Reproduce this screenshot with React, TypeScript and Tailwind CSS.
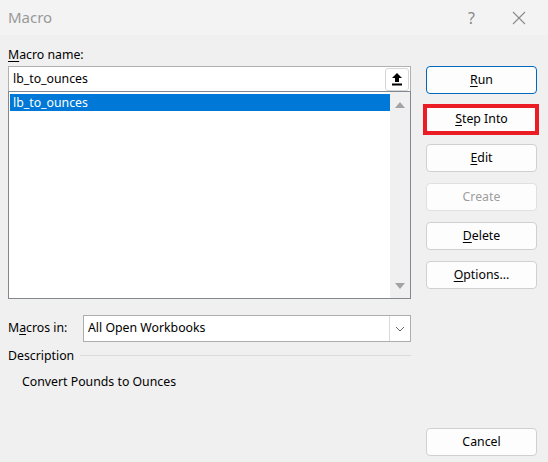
import React from 'react';

const font = { fontFamily: '"Noto Sans", "Open Sans", sans-serif' };

// Dialog push button, optional accent border for the default one
const Btn: React.FC<{ children: React.ReactNode; primary?: boolean; disabled?: boolean }> = ({ children, primary, disabled }) => (
  <div
    className={`h-[28px] w-[111px] shrink-0 rounded-[4px] border flex items-center justify-center text-[12.3px] bg-[#fdfdfd] ${
      primary ? 'border-[#0067c0]' : 'border-[#d0d0d0]'
    } ${disabled ? 'text-[#9d9d9d] border-[#e0e0e0]' : 'text-black'}`}
  >
    {children}
  </div>
);

const U: React.FC<{ children: React.ReactNode }> = ({ children }) => <span className="underline underline-offset-[2px]">{children}</span>;

const UpArrow = () => (
  <svg width="12" height="14" viewBox="0 0 12 14">
    <path d="M6 1 L11 6 H8 V10 H4 V6 H1 Z" fill="#000" />
    <rect x="1" y="11.5" width="10" height="2" fill="#000" />
  </svg>
);

const Tri: React.FC<{ down?: boolean }> = ({ down }) => (
  <svg width="12" height="8" viewBox="0 0 12 8">
    <path d={down ? 'M1 1 H11 L6 7 Z' : 'M1 7 H11 L6 1 Z'} fill="#a3a3a3" />
  </svg>
);

export default function App() {
  return (
    <div className="w-[548px] h-[462px] bg-[#f0f0f0] flex flex-col select-none" style={font}>
      {/* title bar */}
      <div className="h-[35px] bg-[#f3f3f3] flex items-center pl-[8px] text-[15px] text-[#999]">
        <span>Macro</span>
        <span className="ml-auto mr-[37px] text-[16px] text-[#8a8a8a]">?</span>
        <svg className="mr-[22px]" width="14" height="14" viewBox="0 0 14 14">
          <path d="M1 1 L13 13 M13 1 L1 13" stroke="#8a8a8a" strokeWidth="1.1" />
        </svg>
      </div>

      <div className="flex-1 flex pl-[8px] pr-[11px] pb-[6px] gap-[15px] text-[12.3px] text-black">
        {/* left column */}
        <div className="w-[403px] flex flex-col">
          <div className="h-[20px] mt-[10px] leading-[20px]"><U>M</U>acro name:</div>
          <div className="h-[25px] mt-[1px] border border-[#b0b0b0] border-b-0 bg-white flex items-center pl-[4px] pr-[1px]">
            <span>lb_to_ounces</span>
            <div className="ml-auto h-[23px] w-[24px] rounded-[3px] border border-[#d6d6d6] bg-white flex items-center justify-center">
              <UpArrow />
            </div>
          </div>
          <div className="h-[208px] border border-[#828790] bg-white flex">
            <div className="flex-1 pt-[2px] pl-[1px]">
              <div className="h-[17px] bg-[#0078d7] text-white leading-[17px] pl-[3px]">lb_to_ounces</div>
            </div>
            <div className="w-[20px] bg-[#f0f0f0] flex flex-col items-center justify-between pt-[9px] pb-[8px]">
              <Tri />
              <Tri down />
            </div>
          </div>

          <div className="flex items-center mt-[16px]">
            <span className="w-[75px]">M<U>a</U>cros in:</span>
            <div className="flex-1 h-[27px] border border-[#adadad] bg-white flex items-center pl-[4px]">
              <span>All Open Workbooks</span>
              <div className="ml-auto h-[25px] w-[21px] border-l border-[#d9d9d9] flex items-center justify-center">
                <svg width="10" height="6" viewBox="0 0 10 6">
                  <path d="M1 1 L5 5 L9 1" stroke="#555" fill="none" strokeWidth="0.9" />
                </svg>
              </div>
            </div>
          </div>

          <div className="flex items-center mt-[4px] h-[20px]">
            <span>Description</span>
            <div className="flex-1 ml-[6px] h-px bg-[#dadada] -translate-y-px" />
          </div>
          <div className="pl-[14px] mt-[6px] leading-[20px]">Convert Pounds to Ounces</div>
        </div>

        {/* right column */}
        <div className="flex flex-col pt-[31px] gap-[11px]">
          <Btn primary><span><U>R</U>un</span></Btn>
          <div className="relative">
            <Btn><span><U>S</U>tep Into</span></Btn>
            <div className="absolute -left-[3px] -right-[2px] -top-[1px] -bottom-[2px] border-[4px] border-[#ec1c24]" />
          </div>
          <Btn><span><U>E</U>dit</span></Btn>
          <Btn disabled>Create</Btn>
          <Btn><span><U>D</U>elete</span></Btn>
          <Btn><span><U>O</U>ptions...</span></Btn>
          <div className="mt-auto">
            <Btn>Cancel</Btn>
          </div>
        </div>
      </div>
    </div>
  );
}
